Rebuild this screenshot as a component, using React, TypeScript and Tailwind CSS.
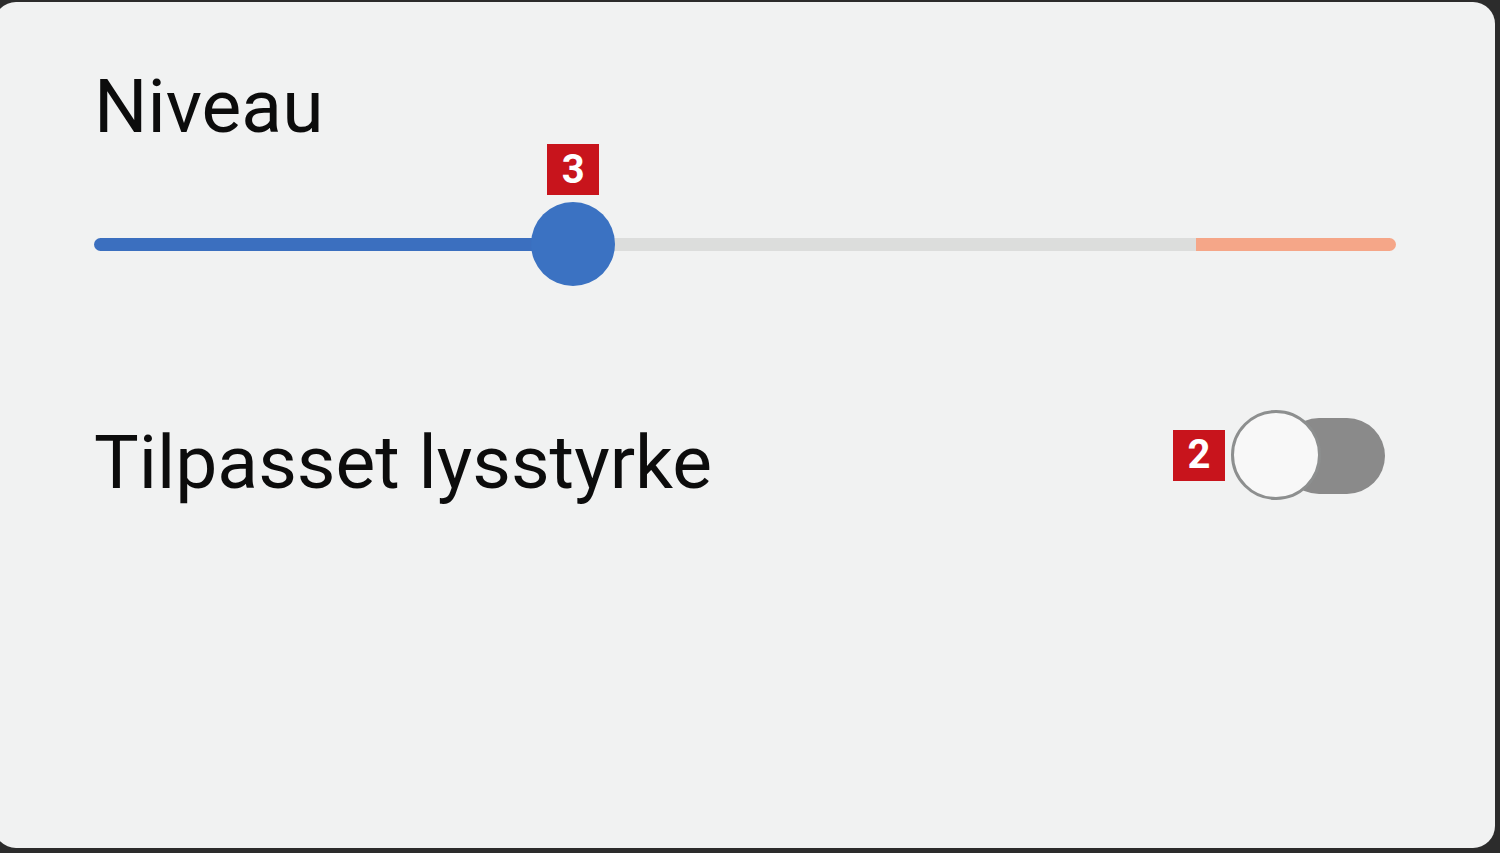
function Badge({ n }: { n: string }) {
  return (
    <div className="flex h-[51px] w-[52px] items-center justify-center bg-[#c8141c] text-[40px] font-bold leading-none text-white">
      {n}
    </div>
  );
}

function LevelSlider({ value }: { value: number }) {
  // value as fraction of track; red zone at the end
  const pct = value * 100;
  return (
    <div className="relative h-[84px] w-[1302px]">
      <div className="absolute left-0 right-0 top-[36px] flex h-[13px] overflow-hidden rounded-full">
        <div className="bg-[#3b6fbf]" style={{ width: `${pct}%` }} />
        <div className="flex-1 bg-[#dcdddc]" />
        <div className="w-[200px] bg-[#f5a688]" />
      </div>
      <div
        className="absolute top-0 h-[84px] w-[84px] -translate-x-1/2 rounded-full bg-[#3b72c2]"
        style={{ left: `${pct}%` }}
      />
      <div className="absolute top-[-58px] -translate-x-1/2" style={{ left: `${pct}%` }}>
        <Badge n="3" />
      </div>
    </div>
  );
}

function Toggle() {
  return (
    <div className="relative h-[90px] w-[154px]">
      <div className="absolute left-[50px] top-[8px] h-[76px] w-[104px] rounded-full bg-[#8a8a8a]" />
      <div className="absolute left-0 top-0 h-[90px] w-[90px] rounded-full border-[3px] border-[#8d8f8f] bg-[#f8f8f8]" />
    </div>
  );
}

export default function App() {
  return (
    <div className="h-[853px] w-[1500px] overflow-hidden bg-[#2c2c2c] pt-[2px]" style={{ fontFamily: 'Roboto, "Noto Sans", sans-serif' }}>
      <div className="ml-[-6px] h-[846px] w-[1501px] rounded-[22px] bg-[#f1f2f2] pl-[100px] pr-[94px] pt-[62px]">
        <div className="text-[75px] leading-[84px] text-[#0c0c0c]">Niveau</div>
        <div className="mt-[54px]">
          <LevelSlider value={0.368} />
        </div>
        <div className="mt-[124px] flex items-start justify-between pr-[16px]">
          <div className="mt-[10px] text-[75px] leading-[84px] text-[#0c0c0c]">Tilpasset lysstyrke</div>
          <div className="flex items-center gap-[6px]">
            <Badge n="2" />
            <Toggle />
          </div>
        </div>
      </div>
    </div>
  );
}
